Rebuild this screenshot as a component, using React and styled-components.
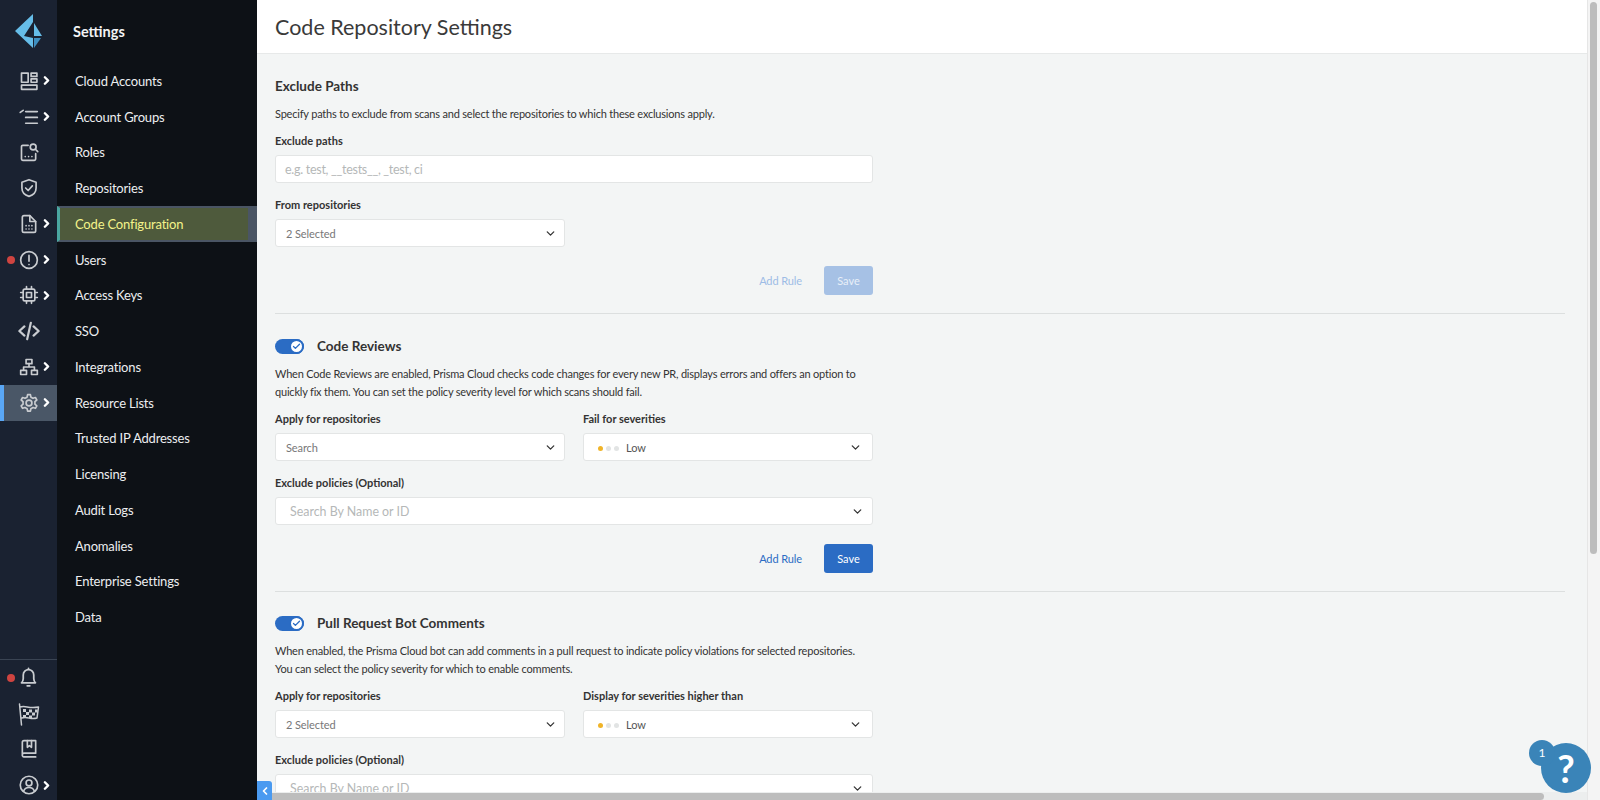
import React from 'react';
import styled, { createGlobalStyle } from 'styled-components';
import { ChevronRight, ChevronDown, ChevronLeft, Check } from 'lucide-react';

const GlobalStyle = createGlobalStyle`
  html, body { margin: 0; height: 100%; overflow: hidden; }
  body { font-family: Lato, "Open Sans", sans-serif; color: #333; }
  #root { height: 100%; }
  * { box-sizing: border-box; }
`;

const Page = styled.div`
  display: flex;
  height: 800px;
  width: 1600px;
  position: relative;
  overflow: hidden;
  background: #f3f5f5;
`;

/* icon rail */
const Rail = styled.nav`
  width: 57px;
  flex: none;
  background: #1a2231;
  display: flex;
  flex-direction: column;
`;

const LogoBox = styled.div`
  height: 63px;
  display: flex;
  align-items: flex-start;
  padding: 14px 0 0 15px;
`;

const RailGroup = styled.div`
  display: flex;
  flex-direction: column;
`;

const RailBottom = styled(RailGroup)`
  margin-top: auto;
  margin-bottom: -3px;
  border-top: 1px solid #3a4453;
`;

const RailItem = styled.div`
  height: 35.75px;
  position: relative;
  display: flex;
  align-items: center;
  justify-content: center;
  color: #c9ccd0;
  background: ${p => (p.$active ? '#4a5767' : 'transparent')};
  border-left: ${p => (p.$active ? '4px solid #5aa7f5' : '0')};
  padding-right: ${p => (p.$active ? '4px' : '0')};
  svg.glyph { display: block; }
`;

const RailArrow = styled(ChevronRight)`
  position: absolute;
  left: ${p => (p.$shift ? 36 : 40)}px;
  top: 50%;
  margin-top: -6.500px;
  color: #fff;
`;

const RedDot = styled.span`
  position: absolute;
  left: 7px;
  top: 50%;
  margin-top: -4px;
  width: 8px;
  height: 8px;
  border-radius: 50%;
  background: #cf4440;
`;

/* settings menu */
const Menu = styled.aside`
  width: 200px;
  flex: none;
  background: #0d1116;
  display: flex;
  flex-direction: column;
`;

const MenuTitle = styled.div`
  height: 63px;
  padding: 23px 0 0 16px;
  font-size: 14.500px;
  font-weight: 700;
  line-height: 17px;
  color: #f2f3f4;
`;

const MenuItem = styled.div`
  height: 35.75px;
  display: flex;
  align-items: center;
  padding-left: 18px;
  font-size: 13px;
  letter-spacing: -0.18px;
  color: #eceef0;
`;

const ActiveItem = styled(MenuItem)`
  padding-left: 15px;
  color: #f3f38a;
  background: linear-gradient(to right, #4e5a3c 188px, #4a5564 188px);
  border-top: 2px solid #4a5564;
  border-bottom: 2px solid #4a5564;
  border-left: 3px solid #4aa6a0;
`;

/* main area */
const Main = styled.main`
  flex: 1;
  min-width: 0;
  display: flex;
  flex-direction: column;
  overflow: hidden;
`;

const Header = styled.header`
  height: 54px;
  flex: none;
  background: #fff;
  border-bottom: 1px solid #e7e9e9;
  padding: 0 18px;
  display: flex;
  align-items: center;
  font-size: 21.500px;
  color: #3a3a3a;
`;

const Content = styled.div`
  flex: 1;
  min-height: 0;
  overflow: hidden;
  padding: 0 22px 0 18px;
`;

const Section = styled.section`
  padding-top: ${p => p.$top || 24}px;
  padding-bottom: 18px;
  border-bottom: ${p => (p.$last ? '0' : '1px solid #dcdfdf')};
`;

const SectionHead = styled.div`
  display: flex;
  align-items: center;
  gap: 13px;
  height: 16px;
`;

const SectionTitle = styled.h2`
  margin: 0;
  font-size: 13.500px;
  line-height: 16px;
  font-weight: 700;
  color: #333;
`;

const Toggle = styled.span`
  width: 29px;
  height: 15px;
  border-radius: 8px;
  background: #2b6cc4;
  position: relative;
  display: block;
  flex: none;
`;

const ToggleKnob = styled.span`
  position: absolute;
  right: 0;
  top: 0;
  width: 15px;
  height: 15px;
  border-radius: 50%;
  background: #fff;
  border: 2px solid #2b6cc4;
  display: flex;
  align-items: center;
  justify-content: center;
  color: #2b6cc4;
`;

const Description = styled.p`
  margin: 11px 0 0;
  width: 598px;
  font-size: 11px;
  letter-spacing: -0.2px;
  line-height: 18px;
  color: #333;
`;

const Fields = styled.div`
  width: 598px;
  display: grid;
  grid-template-columns: 290px 290px;
  column-gap: 18px;
`;

const Field = styled.div`
  grid-column: ${p => (p.$wide ? '1 / span 2' : 'auto')};
  margin-top: ${p => p.$gap ?? 15}px;
`;

const Label = styled.label`
  display: block;
  font-size: 11px;
  line-height: 14px;
  font-weight: 700;
  color: #333;
  margin-bottom: 7px;
`;

const Control = styled.div`
  height: 28px;
  background: #fff;
  border: 1px solid #e3e5e5;
  border-radius: 3px;
  display: flex;
  align-items: center;
  padding: 0 ${p => p.$end || 7}px 0 ${p => p.$pad || 10}px;
  font-size: 11px;
  letter-spacing: -0.1px;
  color: #777;
`;

const PlaceholderBox = styled(Control)`
  font-size: 12.500px;
  letter-spacing: -0.28px;
  color: #b5b8b8;
`;

const PolicySearch = styled(Control)`
  font-size: 12.400px;
  letter-spacing: 0;
  color: #b5b8b8;
`;

const ControlText = styled.span`
  flex: 1;
  display: flex;
  align-items: center;
  white-space: nowrap;
`;

const SeverityText = styled(ControlText)`
  color: #555;
`;

const SeverityDots = styled.span`
  display: flex;
  gap: 3px;
  margin: 2px 7px 0 4px;
`;

const Dot = styled.i`
  width: 5px;
  height: 5px;
  border-radius: 50%;
  background: ${p => p.$color};
`;

const Actions = styled.div`
  width: 598px;
  display: flex;
  justify-content: flex-end;
  align-items: center;
  gap: 22px;
  margin-top: 19px;
`;

const LinkButton = styled.span`
  font-size: 11px;
  letter-spacing: -0.1px;
  color: ${p => (p.$off ? '#9dbce6' : '#2b6cc4')};
`;

const SaveButton = styled.span`
  width: 49px;
  height: 29px;
  border-radius: 3px;
  background: ${p => (p.$off ? '#a6c1e5' : '#2b6cc4')};
  color: ${p => (p.$off ? '#e8eff8' : '#fff')};
  font-size: 11px;
  display: flex;
  align-items: center;
  justify-content: center;
`;

const BottomBar = styled.div`
  height: 8px;
  flex: none;
  background: #eceeee;
`;

const BottomThumb = styled.div`
  width: 1287px;
  height: 7px;
  margin-top: 1px;
  border-radius: 4px;
  background: #bdbdbd;
`;

const ScrollTrack = styled.div`
  width: 13px;
  flex: none;
  background: #f4f4f4;
  border-left: 1px solid #e6e6e6;
  padding: 2px 0 0 2px;
`;

const ScrollThumb = styled.div`
  width: 7px;
  height: 552px;
  border-radius: 4px;
  background: #bdbdbd;
`;

const Collapse = styled.div`
  position: absolute;
  left: 257px;
  bottom: 0;
  width: 15px;
  height: 19px;
  background: #4a9af0;
  border-radius: 0 3px 0 0;
  color: #fff;
  display: flex;
  align-items: center;
  justify-content: center;
`;

const HelpButton = styled.div`
  position: absolute;
  left: 1541px;
  top: 743px;
  width: 50px;
  height: 50px;
  border-radius: 50%;
  background: #3a84b8;
  color: #fff;
  font-size: 38px;
  font-weight: 700;
  line-height: 50px;
  text-align: center;
`;

const HelpBadge = styled.div`
  position: absolute;
  left: 1529px;
  top: 740px;
  width: 26px;
  height: 26px;
  border-radius: 50%;
  background: #3a84b8;
  color: #fff;
  font-size: 12px;
  line-height: 26px;
  text-align: center;
`;

const Glyph = ({ children, size = 20, box = 24, width = 2 }) => (
  <svg className="glyph" width={size} height={size} viewBox={`0 0 ${box} ${box}`} fill="none" stroke="currentColor" strokeWidth={width} strokeLinecap="round" strokeLinejoin="round">
    {children}
  </svg>
);

const Logo = () => (
  <svg width="28" height="35" viewBox="0 0 28 35">
    <polygon points="18,0 0,17 18,34 18,24 9,22 18,8" fill="#66bde8" />
    <polygon points="19,9 27,22 19,22" fill="#66bde8" />
    <polygon points="19,24 26,24 19,34" fill="#3f8fc0" />
  </svg>
);

const railTop = [
  {
    arrow: true,
    icon: (
      <Glyph>
        <rect x="3" y="2.500" width="8" height="11" />
        <rect x="14.500" y="2.500" width="7" height="4" />
        <rect x="14.500" y="9.500" width="7" height="4" />
        <rect x="3" y="17" width="18.500" height="5" />
      </Glyph>
    ),
  },
  {
    arrow: true,
    icon: (
      <Glyph>
        <path d="M8 5.500h14M8 12.500h14M8 19.500h14M1.500 6.500L5 4" />
      </Glyph>
    ),
  },
  {
    icon: (
      <Glyph>
        <path d="M11 4H4.500A1.500 1.500 0 0 0 3 5.500v15A1.500 1.500 0 0 0 4.500 22h14a1.500 1.500 0 0 0 1.500-1.500V14" />
        <circle cx="17" cy="6" r="3.500" />
        <path d="M20 9l2.500 2.500M7.500 17.500h.01M11.500 17.500h.01M15.500 17.500h.01" />
      </Glyph>
    ),
  },
  {
    icon: (
      <Glyph>
        <path d="M12 2l8.500 3v7c0 5-3.500 8.500-8.500 10-5-1.500-8.500-5-8.500-10V5z" />
        <path d="M8 12l3 3 5-5.500" />
      </Glyph>
    ),
  },
  {
    arrow: true,
    icon: (
      <Glyph>
        <path d="M13 2H6a2 2 0 0 0-2 2v16a2 2 0 0 0 2 2h12a2 2 0 0 0 2-2V9z" />
        <path d="M13 2v7h7M8.500 14h.01M12 14h.01M15.500 14h.01M8.500 18h.01M12 18h.01M15.500 18h.01" />
      </Glyph>
    ),
  },
  {
    arrow: true,
    dot: true,
    icon: (
      <Glyph>
        <circle cx="12" cy="12" r="10" />
        <path d="M12 6.500v7M12 17.500h.01" />
      </Glyph>
    ),
  },
  {
    arrow: true,
    icon: (
      <Glyph>
        <rect x="5" y="5" width="14" height="14" rx="2" />
        <rect x="9" y="9" width="6" height="6" />
        <path d="M9 2v3M15 2v3M9 19v3M15 19v3M2 9h3M2 15h3M19 9h3M19 15h3" />
      </Glyph>
    ),
  },
  {
    icon: (
      <Glyph size={22} width={2.400}>
        <path d="M7 7l-5.500 5L7 17M17 7l5.500 5L17 17M14 3l-4 18" />
      </Glyph>
    ),
  },
  {
    arrow: true,
    icon: (
      <Glyph>
        <rect x="8.500" y="3" width="7" height="5" />
        <rect x="2" y="16" width="7" height="5" />
        <rect x="15" y="16" width="7" height="5" />
        <path d="M12 8v4M5.500 16v-4h13v4" />
      </Glyph>
    ),
  },
  {
    arrow: true,
    active: true,
    icon: (
      <Glyph>
        <circle cx="12" cy="12" r="3.500" />
        <path d="M10.300 2h3.400l.6 3 2.500 1.400 2.900-1 1.700 3-2.300 2c.1 1 .1 2 0 3l2.300 2-1.700 3-2.900-1-2.500 1.400-.6 3h-3.400l-.6-3-2.500-1.400-2.900 1-1.700-3 2.300-2c-.1-1-.1-2 0-3l-2.300-2 1.700-3 2.900 1L9.700 5z" />
      </Glyph>
    ),
  },
];

const railBottom = [
  {
    dot: true,
    icon: (
      <Glyph size={21}>
        <path d="M4 18c1.500-1.500 2-3 2-5V9a6 6 0 0 1 12 0v4c0 2 .5 3.500 2 5zM12 3V1.500M10.500 21.500h3" />
      </Glyph>
    ),
  },
  {
    icon: (
      <Glyph size={24} width={1.500}>
        <path d="M2.500 2l2 21M3 5c6-2 8 2 18.500 0L20 16c-7 2-9-2-15.500 0" />
        <path d="M6 7h3v3H6zM12 7.500h3v3h-3zM18 7.500h2.500v3H18zM9 10h3v3H9zM15 10.500h3v3h-3zM6 13h3v2.500H6zM12 13.500h3V16h-3z" fill="currentColor" stroke="none" />
      </Glyph>
    ),
  },
  {
    icon: (
      <Glyph>
        <path d="M4 19V4a2 2 0 0 1 2-2h14v15H6a2 2 0 0 0-2 2 2 2 0 0 0 2 2.500h14" />
        <path d="M10 2v8l2.500-2 2.500 2V2" />
      </Glyph>
    ),
  },
  {
    arrow: true,
    icon: (
      <Glyph>
        <circle cx="12" cy="12" r="10.500" />
        <circle cx="12" cy="9.500" r="3.500" />
        <path d="M5.500 19.500c1-3 3.500-4.500 6.500-4.500s5.500 1.500 6.500 4.500" />
      </Glyph>
    ),
  },
];

const menuItems = [
  'Cloud Accounts',
  'Account Groups',
  'Roles',
  'Repositories',
  'Code Configuration',
  'Users',
  'Access Keys',
  'SSO',
  'Integrations',
  'Resource Lists',
  'Trusted IP Addresses',
  'Licensing',
  'Audit Logs',
  'Anomalies',
  'Enterprise Settings',
  'Data',
];

function RailEntry({ item }) {
  return (
    <RailItem $active={item.active}>
      {item.dot && <RedDot />}
      {item.icon}
      {item.arrow && <RailArrow size={13} strokeWidth={4.500} $shift={item.active} />}
    </RailItem>
  );
}

const Arrow = () => <ChevronDown size={13} strokeWidth={2.400} color="#333" />;

function Select({ children }) {
  return (
    <Control>
      <ControlText>{children}</ControlText>
      <Arrow />
    </Control>
  );
}

function Severity() {
  return (
    <Control $end={10}>
      <SeverityText>
        <SeverityDots>
          <Dot $color="#f0b429" />
          <Dot $color="#e2e4e4" />
          <Dot $color="#e2e4e4" />
        </SeverityDots>
        Low
      </SeverityText>
      <Arrow />
    </Control>
  );
}

function PolicySelect() {
  return (
    <PolicySearch $pad={14} $end={8}>
      <ControlText>Search By Name or ID</ControlText>
      <Arrow />
    </PolicySearch>
  );
}

function SwitchHead({ children }) {
  return (
    <SectionHead>
      <Toggle>
        <ToggleKnob>
          <Check size={9} strokeWidth={3.500} />
        </ToggleKnob>
      </Toggle>
      <SectionTitle>{children}</SectionTitle>
    </SectionHead>
  );
}

function RuleActions({ off }) {
  return (
    <Actions>
      <LinkButton $off={off}>Add Rule</LinkButton>
      <SaveButton $off={off}>Save</SaveButton>
    </Actions>
  );
}

export default function App() {
  return (
    <Page>
      <GlobalStyle />
      <Rail>
        <LogoBox>
          <Logo />
        </LogoBox>
        <RailGroup>
          {railTop.map((item, i) => (
            <RailEntry key={i} item={item} />
          ))}
        </RailGroup>
        <RailBottom>
          {railBottom.map((item, i) => (
            <RailEntry key={i} item={item} />
          ))}
        </RailBottom>
      </Rail>

      <Menu>
        <MenuTitle>Settings</MenuTitle>
        {menuItems.map(name =>
          name === 'Code Configuration' ? <ActiveItem key={name}>{name}</ActiveItem> : <MenuItem key={name}>{name}</MenuItem>
        )}
      </Menu>

      <Main>
        <Header>Code Repository Settings</Header>
        <Content>
          <Section>
            <SectionTitle>Exclude Paths</SectionTitle>
            <Description>Specify paths to exclude from scans and select the repositories to which these exclusions apply.</Description>
            <Fields>
              <Field $wide $gap={11}>
                <Label>Exclude paths</Label>
                <PlaceholderBox $pad={9}>e.g. test, __tests__, _test, ci</PlaceholderBox>
              </Field>
              <Field>
                <Label>From repositories</Label>
                <Select>2 Selected</Select>
              </Field>
            </Fields>
            <RuleActions off />
          </Section>

          <Section>
            <SwitchHead>Code Reviews</SwitchHead>
            <Description>
              When Code Reviews are enabled, Prisma Cloud checks code changes for every new PR, displays errors and offers an option to quickly fix them. You can set the policy severity level for which scans should fail.
            </Description>
            <Fields>
              <Field $gap={11}>
                <Label>Apply for repositories</Label>
                <Select>Search</Select>
              </Field>
              <Field $gap={11}>
                <Label>Fail for severities</Label>
                <Severity />
              </Field>
              <Field $wide>
                <Label>Exclude policies (Optional)</Label>
                <PolicySelect />
              </Field>
            </Fields>
            <RuleActions />
          </Section>

          <Section $last $top={23}>
            <SwitchHead>Pull Request Bot Comments</SwitchHead>
            <Description>
              When enabled, the Prisma Cloud bot can add comments in a pull request to indicate policy violations for selected repositories. You can select the policy severity for which to enable comments.
            </Description>
            <Fields>
              <Field $gap={11}>
                <Label>Apply for repositories</Label>
                <Select>2 Selected</Select>
              </Field>
              <Field $gap={11}>
                <Label>Display for severities higher than</Label>
                <Severity />
              </Field>
              <Field $wide>
                <Label>Exclude policies (Optional)</Label>
                <PolicySelect />
              </Field>
            </Fields>
          </Section>
        </Content>
        <BottomBar>
          <BottomThumb />
        </BottomBar>
      </Main>

      <ScrollTrack>
        <ScrollThumb />
      </ScrollTrack>

      <Collapse>
        <ChevronLeft size={12} strokeWidth={3.500} />
      </Collapse>
      <HelpButton>?</HelpButton>
      <HelpBadge>1</HelpBadge>
    </Page>
  );
}
